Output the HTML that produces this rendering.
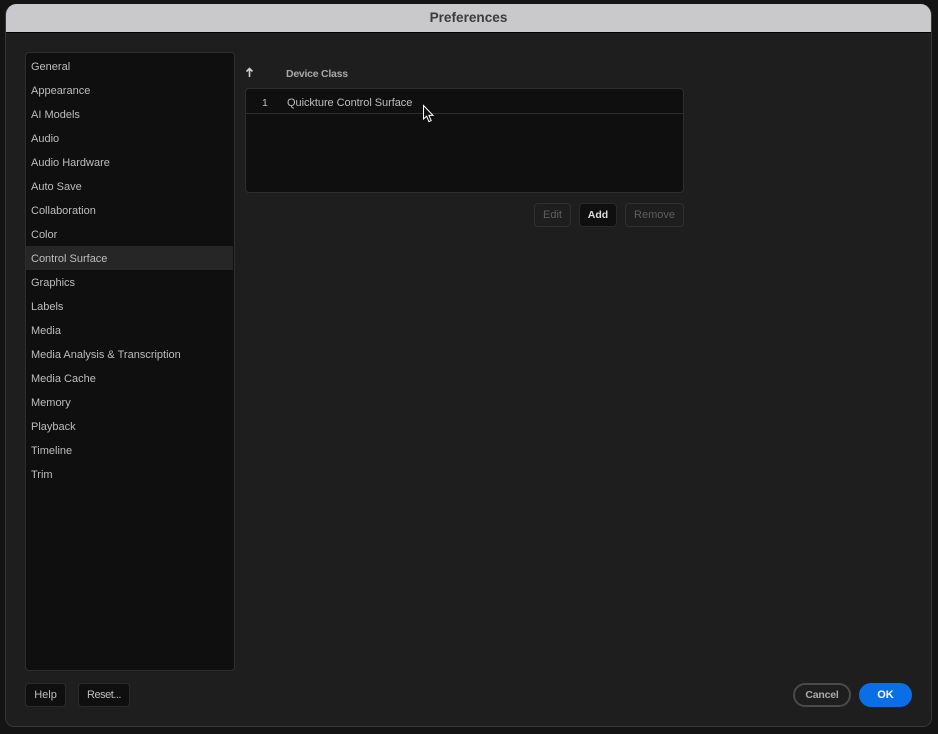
<!DOCTYPE html>
<html lang="en"><head><meta charset="utf-8"><title>Preferences</title>
<style>
html,body{margin:0;padding:0;width:938px;height:734px;overflow:hidden;background:#141414}
body{position:relative;font-family:"Liberation Sans",sans-serif;font-size:11px;color:#bdbdbd}
div,span{position:absolute;box-sizing:border-box;white-space:nowrap}
.win{left:5px;top:4px;width:927px;height:723px;background:#1e1e1e;border:1px solid #363636;border-top:0;border-radius:11px 11px 9px 9px;overflow:hidden}
.title{left:-1px;top:0;width:927px;height:29px;background:#c9c9cb;border-bottom:1px solid #000;color:#3c3c3c;font-weight:bold;font-size:13.6px;line-height:27px;text-align:center}
.side{left:25px;top:52px;width:210px;height:619px;background:#0f0f0f;border:1px solid #2e2e2e;border-radius:4px}
.it{left:31px;line-height:16px;height:16px}
.sel{left:26px;top:246px;width:207px;height:24px;background:#262626}
.tbl{left:245px;top:88px;width:439px;height:105px;background:#0f0f0f;border:1px solid #2e2e2e;border-radius:4px}
.sep{left:246px;top:113px;width:437px;height:1px;background:#2e2e2e}
.btn{height:24px;border-radius:4px;border:1px solid #2a2a2a;line-height:23px;text-align:center;background:#0f0f0f;color:#bdbdbd}
.dis{background:#1e1e1e;border-color:#303030;color:#5e5e5e}
.pill{top:683px;height:24px;border-radius:12px;line-height:24px;text-align:center;font-weight:bold;font-size:11px}
</style></head><body>
<div class="win"><div class="title">Preferences</div></div>
<div class="side"></div>
<div class="sel"></div>
<div class="it" style="top:59px">General</div>
<div class="it" style="top:83px">Appearance</div>
<div class="it" style="top:107px">AI Models</div>
<div class="it" style="top:131px">Audio</div>
<div class="it" style="top:155px">Audio Hardware</div>
<div class="it" style="top:179px">Auto Save</div>
<div class="it" style="top:203px">Collaboration</div>
<div class="it" style="top:227px">Color</div>
<div class="it" style="top:251px">Control Surface</div>
<div class="it" style="top:275px">Graphics</div>
<div class="it" style="top:299px">Labels</div>
<div class="it" style="top:323px">Media</div>
<div class="it" style="top:347px">Media Analysis &amp; Transcription</div>
<div class="it" style="top:371px">Media Cache</div>
<div class="it" style="top:395px">Memory</div>
<div class="it" style="top:419px">Playback</div>
<div class="it" style="top:443px">Timeline</div>
<div class="it" style="top:467px">Trim</div>
<svg style="position:absolute;left:245px;top:67px" width="9" height="11" viewBox="0 0 9 11"><path d="M4.5 10V1.5M1.5 4.5L4.5 1.5L7.5 4.5" fill="none" stroke="#d0d0d0" stroke-width="1.6"/></svg>
<div class="it" style="left:286px;top:66px;font-weight:bold;font-size:10.5px;letter-spacing:-.25px;color:#a8a8a8">Device Class</div>
<div class="tbl"></div>
<div class="sep"></div>
<div class="it" style="left:262px;top:95px;font-size:10.5px">1</div>
<div class="it" style="left:287px;top:95px;letter-spacing:-.05px">Quickture Control Surface</div>
<svg style="position:absolute;left:422px;top:104px" width="13" height="19" viewBox="0 0 13 19"><path d="M1.5 1.5V15L4.6 12.2L6.9 17.6L9.2 16.6L6.9 11.4H11L1.5 1.5Z" fill="#111" stroke="#fff" stroke-width="1"/></svg>
<div class="btn dis" style="left:534px;top:203px;width:37px">Edit</div>
<div class="btn" style="left:579px;top:203px;width:38px;color:#dcdcdc;font-weight:bold;font-size:10.5px">Add</div>
<div class="btn dis" style="left:625px;top:203px;width:59px">Remove</div>
<div class="btn" style="left:25px;top:683px;width:41px">Help</div>
<div class="btn" style="left:78px;top:683px;width:52px;letter-spacing:-.5px">Reset...</div>
<div class="pill" style="left:793px;width:58px;border:2px solid #4a4a4a;line-height:20px;color:#aaa;font-size:10.5px;letter-spacing:-.2px">Cancel</div>
<div class="pill" style="left:859px;width:53px;background:#0a6fe6;color:#fff;font-size:11px">OK</div>
</body></html>
